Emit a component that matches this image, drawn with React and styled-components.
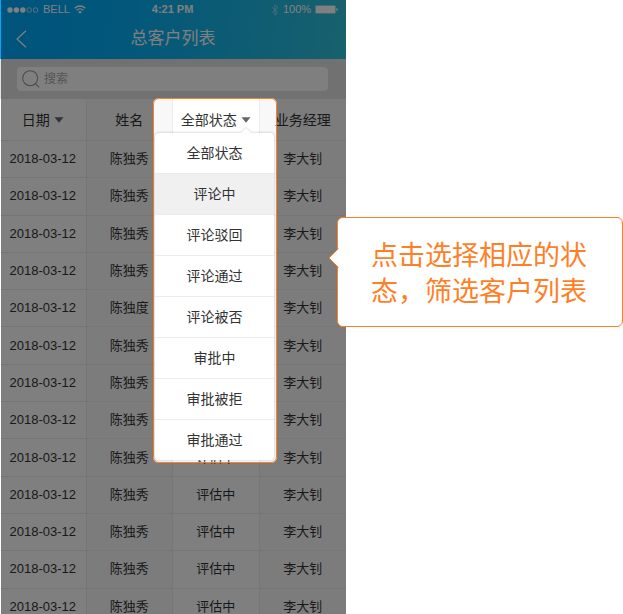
import React from 'react';
import styled, { createGlobalStyle } from 'styled-components';

const Global = createGlobalStyle`
  *, *::before, *::after { box-sizing: border-box; }
  body {
    margin: 0;
    background: #fff;
    color: #333;
    font-family: "Liberation Sans", "Noto Sans CJK SC", sans-serif;
  }
  button, input { font: inherit; color: inherit; }
`;

const Page = styled.main`
  display: grid;
  grid-template-columns: 5fr 4fr;
  align-items: start;
  height: 100vh;
  overflow: hidden;
`;

const Phone = styled.section`
  position: relative;
  height: 100vh;
  overflow: hidden;
  background: #fff;
`;

const Banner = styled.header`
  color: #fff;
  background: linear-gradient(95deg, #00a8fa 0%, #04aef6 35%, #30c2da 100%);
`;

const StatusBar = styled.div`
  display: grid;
  grid-template-columns: 1fr auto 1fr;
  align-items: center;
  height: 19px;
  padding: 0 8px 0 7px;
  font-size: 11px;
  line-height: 19px;
`;

const StatusGroup = styled.div`
  display: flex;
  align-items: center;
  gap: 4px;
  justify-content: ${(p) => (p.$end ? 'flex-end' : 'flex-start')};
`;

const Clock = styled.time`
  font-weight: 700;
`;

const TitleBar = styled.div`
  display: grid;
  grid-template-columns: 48px 1fr 48px;
  align-items: center;
  height: 40px;
`;

const BackButton = styled.button`
  display: flex;
  align-items: center;
  height: 40px;
  padding: 0 0 0 16px;
  border: 0;
  background: none;
`;

const Title = styled.h1`
  margin: 0;
  font-size: 17px;
  line-height: 40px;
  font-weight: 400;
  text-align: center;
`;

const SearchBar = styled.form`
  padding: 8px 18px 8px 17px;
  background: #e2e3e5;
`;

const SearchField = styled.label`
  display: flex;
  align-items: center;
  gap: 4px;
  height: 24px;
  padding: 0 5px;
  border-radius: 4px;
  background: #fff;
`;

const SearchInput = styled.input`
  flex: 1;
  min-width: 0;
  padding: 0;
  border: 0;
  outline: 0;
  background: none;
  font-size: 12px;
  line-height: 24px;
  &::placeholder { color: #aaa; opacity: 1; }
`;

const Table = styled.table`
  width: 100%;
  height: 527px;
  table-layout: fixed;
  border-collapse: separate;
  border-spacing: 0;
  text-align: center;
`;

const HeadCell = styled.th`
  height: 42px;
  padding: 0;
  border-bottom: 1px solid #ededed;
  border-right: 1px solid #ededed;
  background: ${(p) => (p.$shaded ? '#f8f8f8' : '#fff')};
  font-size: 14px;
  line-height: 20px;
  font-weight: 400;
  white-space: nowrap;
  &:last-child { border-right: 0; }
`;

const Cell = styled.td`
  padding: 0;
  border-bottom: 1px solid #ededed;
  border-right: 1px solid #ededed;
  background: ${(p) => (p.$shaded ? '#f8f8f8' : '#fff')};
  font-size: 13px;
  line-height: 20px;
  white-space: nowrap;
  &:last-child { border-right: 0; }
`;

const FilterButton = styled.button`
  display: inline-flex;
  align-items: center;
  gap: 4px;
  padding: 0;
  border: 0;
  background: none;
`;

const Overlay = styled.div`
  position: absolute;
  inset: 0 0 0 1px;
  overflow: hidden;
`;

const Spotlight = styled.div`
  position: absolute;
  top: 98px;
  left: 44%;
  width: 36%;
  padding: 34px 2px 2px 1px;
  border: 1px solid #ff7f27;
  border-radius: 6px;
  box-shadow: 0 0 0 2000px rgba(0, 0, 0, 0.5);
`;

const Menu = styled.ul`
  position: relative;
  margin: 0;
  padding: 0;
  list-style: none;
  border-radius: 4px;
  background: #fff;
  box-shadow: 0 0 3px rgba(0, 0, 0, 0.25);
  &::before {
    content: "";
    position: absolute;
    top: -5px;
    right: 23px;
    border: 5px solid transparent;
    border-top: 0;
    border-bottom-color: #fff;
    filter: drop-shadow(0 -1px 1px rgba(0, 0, 0, 0.12));
  }
`;

const MenuItem = styled.li`
  border-bottom: 1px solid #ececec;
  background: ${(p) => (p.$active ? '#f0f0f0' : 'transparent')};
  &:last-child { border-bottom: 0; }
`;

const MenuButton = styled.button`
  display: block;
  width: 100%;
  height: 40px;
  padding: 0;
  border: 0;
  background: none;
  font-size: 14px;
  line-height: 40px;
  text-align: center;
`;

const Callout = styled.aside`
  position: relative;
  margin: 217px 0 0 -9px;
  padding: 20px 32px 16px 33px;
  border: 1px solid #ff7f27;
  border-radius: 6px;
  background: #fff;
  color: #ff7f27;
  font-size: 27px;
  line-height: 36px;
`;

const CalloutArrow = styled.svg`
  position: absolute;
  top: 30px;
  left: -10px;
`;

const CalloutText = styled.p`
  margin: 0;
`;

const Triangle = () => (
  <svg width="10" height="6" viewBox="0 0 10 6" aria-hidden="true">
    <path d="M0.5 0.3h9L5 5.7z" fill="#666" />
  </svg>
);

const SignalDots = () => (
  <svg width="32" height="6" viewBox="0 0 32 6" aria-hidden="true">
    {[0, 1, 2, 3, 4].map((i) => (
      <circle key={i} cx={3 + i * 6.4} cy="3" r={i < 3 ? 2.7 : 2.3}
        fill={i < 3 ? '#fff' : 'none'} stroke={i < 3 ? 'none' : '#fff'} strokeWidth="0.7" />
    ))}
  </svg>
);

const Wifi = () => (
  <svg width="12" height="9" viewBox="0 0 12 9" aria-hidden="true" fill="none" stroke="#fff" strokeWidth="1.3">
    <path d="M0.7 3.2a7.5 7.5 0 0 1 10.6 0M2.6 5.2a4.8 4.8 0 0 1 6.8 0" />
    <path d="M4.2 6.9a2.5 2.5 0 0 1 3.6 0L6 8.8z" fill="#fff" stroke="none" />
  </svg>
);

const Bluetooth = () => (
  <svg width="8" height="12" viewBox="0 0 8 12" aria-hidden="true" fill="none" stroke="#fff" strokeWidth="0.8" opacity="0.6">
    <path d="M1 3.2l6 5.4-3 2.6V0.8l3 2.6-6 5.4" />
  </svg>
);

const Battery = () => (
  <svg width="23" height="9" viewBox="0 0 23 9" aria-hidden="true" fill="#fff">
    <rect x="0.2" y="0.2" width="20.6" height="8.6" rx="1.2" opacity="0.5" />
    <rect x="0.9" y="0.9" width="19.2" height="7.2" rx="0.6" />
    <path d="M21.4 2.9q1.4 0.4 1.4 1.6t-1.4 1.6z" />
  </svg>
);

const BackIcon = () => (
  <svg width="11" height="18" viewBox="0 0 11 18" aria-hidden="true" fill="none" stroke="#fff" strokeWidth="1.2">
    <path d="M10 0.7L1 9l9 8.3" />
  </svg>
);

const SearchIcon = () => (
  <svg width="18" height="18" viewBox="0 0 18 18" aria-hidden="true" fill="none" stroke="#999" strokeWidth="1.1">
    <circle cx="8.2" cy="8.2" r="7.5" />
    <path d="M13.4 13.6l3.8 3.8" />
  </svg>
);

const names = Array.from({ length: 13 }, (_, i) => (i === 4 ? '陈独度' : '陈独秀'));
const options = ['全部状态', '评论中', '评论驳回', '评论通过', '评论被否', '审批中', '审批被拒', '审批通过'];

export default function App() {
  return (
    <>
      <Global />
      <Page>
        <Phone>
          <Banner>
            <StatusBar>
              <StatusGroup><SignalDots /><span>BELL</span><Wifi /></StatusGroup>
              <Clock>4:21 PM</Clock>
              <StatusGroup $end><Bluetooth /><span>100%</span><Battery /></StatusGroup>
            </StatusBar>
            <TitleBar>
              <BackButton aria-label="返回"><BackIcon /></BackButton>
              <Title>总客户列表</Title>
            </TitleBar>
          </Banner>
          <SearchBar role="search">
            <SearchField>
              <SearchIcon />
              <SearchInput type="search" placeholder="搜索" aria-label="搜索" />
            </SearchField>
          </SearchBar>
          <Table>
            <thead>
              <tr>
                <HeadCell><FilterButton>日期<Triangle /></FilterButton></HeadCell>
                <HeadCell $shaded>姓名</HeadCell>
                <HeadCell><FilterButton aria-haspopup="true" aria-expanded="true">全部状态<Triangle /></FilterButton></HeadCell>
                <HeadCell $shaded>业务经理</HeadCell>
              </tr>
            </thead>
            <tbody>
              {names.map((name, i) => (
                <tr key={i}>
                  <Cell>2018-03-12</Cell>
                  <Cell $shaded>{name}</Cell>
                  <Cell>评估中</Cell>
                  <Cell $shaded>李大钊</Cell>
                </tr>
              ))}
            </tbody>
          </Table>
          <Overlay>
            <Spotlight>
              <Menu>
                {options.map((option) => (
                  <MenuItem key={option} $active={option === '评论中'}>
                    <MenuButton>{option}</MenuButton>
                  </MenuItem>
                ))}
              </Menu>
            </Spotlight>
          </Overlay>
        </Phone>
        <Callout>
          <CalloutArrow width="11" height="20" viewBox="0 0 11 20" aria-hidden="true">
            <path d="M10.5 0.5L1 10l9.5 9.5" fill="#fff" stroke="#ff7f27" />
          </CalloutArrow>
          <CalloutText>点击选择相应的状态，筛选客户列表</CalloutText>
        </Callout>
      </Page>
    </>
  );
}
